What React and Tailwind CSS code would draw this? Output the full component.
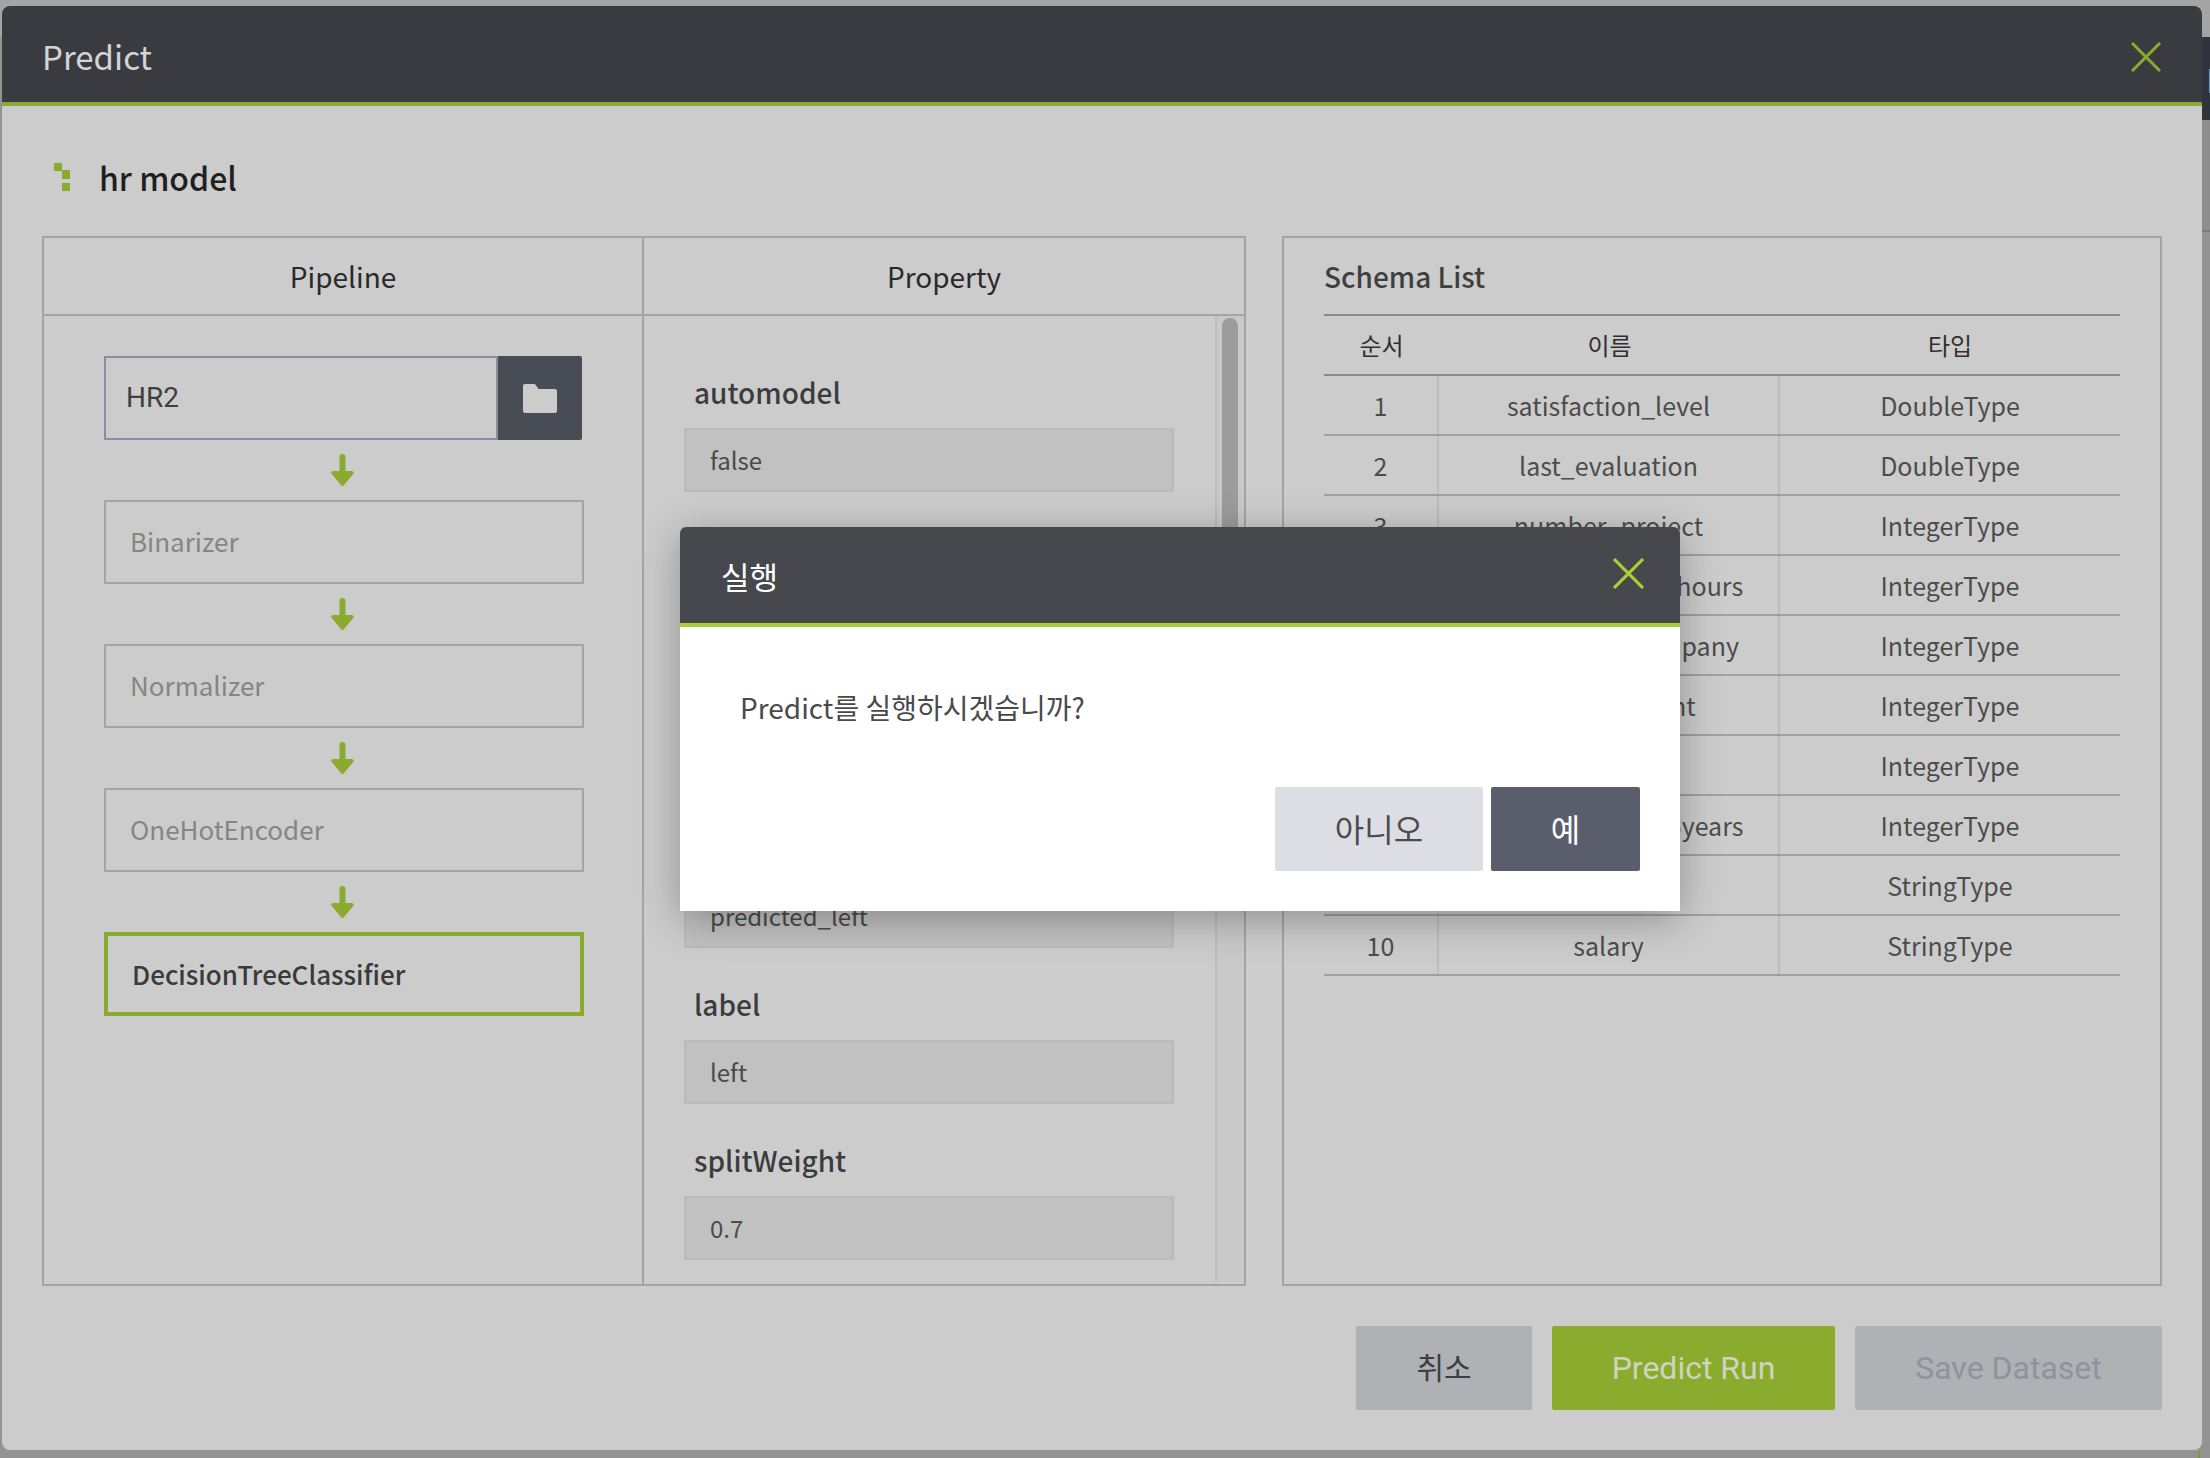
import React from "react";

const NOTO = "font-['Noto_Sans_CJK_KR','Noto_Sans',sans-serif]";
const ROBOTO = "font-['Roboto','Noto_Sans_CJK_KR',sans-serif]";

function CloseIcon({ color, className }) {
  return (
    <svg viewBox="0 0 30 30" className={className} fill="none">
      <path d="M1 1 L29 29 M29 1 L1 29" stroke={color} strokeWidth="3" />
    </svg>
  );
}

function Arrow() {
  return (
    <svg viewBox="0 0 23 32" className="my-[14px] ml-[227px] h-[32px] w-[23px] shrink-0" fill="#8aab2d">
      <path d="M8.5 3 a3 3 0 0 1 6 0 V17 H20.5 a2 2 0 0 1 1.6 3.3 L12.8 31.2 a1.8 1.8 0 0 1 -2.6 0 L.9 20.3 A2 2 0 0 1 2.5 17 H8.5 Z" />
    </svg>
  );
}

function Step({ children }) {
  return (
    <div className="flex h-[84px] w-[480px] items-center border-2 border-[#a4a4a4] pb-[4px] pl-[24px] text-[26px] text-[#858585]">
      {children}
    </div>
  );
}

function Field({ label, value, className = "" }) {
  return (
    <div className={className}>
      <div className="ml-[10px] flex h-[40px] items-center pb-[2px] text-[28px] font-medium leading-none text-[#3c3c3f]">{label}</div>
      <div className="mt-[15px] flex h-[64px] w-[490px] items-center border-2 border-[#bababa] bg-[#c1c1c1] pl-[24px] text-[24px] text-[#4a4a4a]">
        {value}
      </div>
    </div>
  );
}

const rows = [
  ["1", "satisfaction_level", "DoubleType"],
  ["2", "last_evaluation", "DoubleType"],
  ["3", "number_project", "IntegerType"],
  ["4", "average_montly_hours", "IntegerType"],
  ["5", "time_spend_company", "IntegerType"],
  ["6", "Work_accident", "IntegerType"],
  ["7", "left", "IntegerType"],
  ["8", "promotion_last_5years", "IntegerType"],
  ["9", "sales", "StringType"],
  ["10", "salary", "StringType"],
];

export default function App() {
  return (
    <div className={`relative h-[1458px] w-[2210px] overflow-hidden bg-[#939393] ${NOTO}`}>
      {/* page beneath the modal */}
      <div className="h-[37px] bg-[#a4a4a4]" />
      <div className="ml-[2202px] flex h-[83px] items-center bg-[#30343c] pl-[4px] text-[32px] text-[#a8a8a8]">P</div>
      <div className="ml-[2202px] h-[112px] border-b-2 border-[#7b7b7b] bg-[#8e8e8e]" />

      {/* Predict modal */}
      <div className="absolute left-[2px] top-[6px] flex h-[1444px] w-[2200px] flex-col overflow-hidden rounded-[8px] bg-[#cccccc]">
        <div className="flex h-[100px] shrink-0 items-center justify-between border-b-4 border-[#8aab2d] bg-[#3a3b40] pl-[40px] pr-[41px] pt-[5px]">
          <span className="text-[33px] text-[#d4d4d4]">Predict</span>
          <CloseIcon color="#8aab2d" className="h-[30px] w-[30px]" />
        </div>

        <div className="flex flex-1 flex-col pl-[40px] pr-[40px]">
          <div className="flex h-[130px] shrink-0 items-center pt-[12px]">
            <svg viewBox="0 0 16 28" className="ml-[12px] h-[28px] w-[16px]" fill="#8aab2d">
              <rect x="0" y="0" width="8" height="8" />
              <rect x="8" y="7" width="8" height="9" />
              <rect x="8" y="20" width="8" height="8" />
            </svg>
            <span className="ml-[29px] text-[32px] font-medium text-[#1f1f1f]">hr model</span>
          </div>

          <div className="flex h-[1050px] shrink-0 gap-[36px]">
            {/* Pipeline + Property */}
            <div className="flex w-[1204px] shrink-0 flex-col border-2 border-[#a4a4a4]">
              <div className="flex h-[78px] shrink-0 border-b-2 border-[#a4a4a4] text-[28px] text-[#2a2a2a]">
                <div className="flex w-[600px] items-center justify-center border-r-2 border-[#a4a4a4]">Pipeline</div>
                <div className="flex flex-1 items-center justify-center">Property</div>
              </div>
              <div className="flex min-h-0 flex-1">
                <div className="flex w-[600px] shrink-0 flex-col border-r-2 border-[#a4a4a4] pl-[60px] pt-[40px]">
                  <div className="flex h-[84px] shrink-0">
                    <div className={`flex w-[394px] items-center border-2 border-[#8c8f99] pl-[20px] text-[28px] text-[#3f3f3f] ${ROBOTO}`}>HR2</div>
                    <div className="flex w-[84px] items-center justify-center rounded-r-[2px] bg-[#484c55]">
                      <svg viewBox="0 0 34 29" className="h-[29px] w-[34px]" fill="#cccccc">
                        <path d="M0 2 a2 2 0 0 1 2 -2 H11 a2 2 0 0 1 1.6 .8 L15.5 5 H32 a2 2 0 0 1 2 2 V27 a2 2 0 0 1 -2 2 H2 a2 2 0 0 1 -2 -2 Z" />
                      </svg>
                    </div>
                  </div>
                  <Arrow />
                  <Step>Binarizer</Step>
                  <Arrow />
                  <Step>Normalizer</Step>
                  <Arrow />
                  <Step>OneHotEncoder</Step>
                  <Arrow />
                  <div className="flex h-[84px] w-[480px] items-center border-4 border-[#8aab2d] pb-[2px] pl-[24px] text-[26px] font-medium text-[#3a3a3a]">
                    DecisionTreeClassifier
                  </div>
                </div>

                <div className="relative flex-1 overflow-hidden">
                  <div className="pl-[40px] pt-[57px]">
                    <Field label="automodel" value="false" />
                    <Field label="" value="predicted_left" className="mt-[337px]" />
                    <Field label="label" value="left" className="mt-[37px]" />
                    <Field label="splitWeight" value="0.7" className="mt-[37px]" />
                  </div>
                  <div className="absolute bottom-[2px] right-0 top-0 w-[29px] border-l-2 border-[#bcbcbc] bg-[#c9c9c9] pl-[5px] pt-[2px]">
                    <div className="h-[500px] w-[16px] rounded-full bg-[#9c9c9c]" />
                  </div>
                </div>
              </div>
            </div>

            {/* Schema List */}
            <div className="flex-1 border-2 border-[#a4a4a4] pl-[40px] pr-[40px]">
              <div className="flex h-[76px] items-center text-[28px] font-medium text-[#3f3f3f]">Schema List</div>
              <div className="text-[25px] text-[#4c4c4c]">
                <div className="grid h-[62px] grid-cols-[115px_341px_1fr] border-y-2 border-[#8a8a8a] text-[24px] text-[#303030]">
                  <div className="flex items-center justify-center">순서</div>
                  <div className="flex items-center justify-center">이름</div>
                  <div className="flex items-center justify-center">타입</div>
                </div>
                {rows.map((r) => (
                  <div key={r[0]} className="grid h-[60px] grid-cols-[115px_341px_1fr] border-b-2 border-[#a0a0a0]">
                    <div className="flex items-center justify-center border-r-2 border-[#bcbcbc] pt-[2px]">{r[0]}</div>
                    <div className="flex items-center justify-center border-r-2 border-[#bcbcbc] pt-[2px]">{r[1]}</div>
                    <div className="flex items-center justify-center pt-[2px]">{r[2]}</div>
                  </div>
                ))}
              </div>
            </div>
          </div>

          <div className={`mt-[40px] flex justify-end gap-[20px] text-[32px] ${ROBOTO}`}>
            <div className={`flex h-[84px] w-[176px] items-center justify-center rounded-[2px] bg-[#b0b1b5] pb-[4px] text-[30px] text-[#3d3e42] ${NOTO}`}>취소</div>
            <div className="flex h-[84px] w-[283px] items-center justify-center rounded-[2px] bg-[#8aab2d] text-[#cfd3c0]">Predict Run</div>
            <div className="flex h-[84px] w-[307px] items-center justify-center rounded-[2px] bg-[#b0b1b5] text-[#91929a]">Save Dataset</div>
          </div>
        </div>
      </div>

      <div className="absolute left-[2198px] top-[1451px] h-[7px] w-[2px] bg-[#7f9a30]" />

      {/* Confirm dialog */}
      <div className="absolute left-[680px] top-[527px] flex h-[384px] w-[1000px] flex-col overflow-hidden rounded-t-[6px] bg-white shadow-[0_8px_40px_rgba(0,0,0,0.3)]">
        <div className="flex h-[100px] shrink-0 items-center justify-between border-b-4 border-[#a8d032] bg-[#47484e] pl-[41px] pr-[36px]">
          <span className="pt-[2px] text-[31px] text-white">실행</span>
          <CloseIcon color="#a8d032" className="mb-[3px] h-[31px] w-[31px]" />
        </div>
        <div className="pl-[60px] pt-[55px] text-[28px] leading-[50px] text-[#4a4a4a]">Predict를 실행하시겠습니까?</div>
        <div className="mt-[55px] flex justify-end gap-[8px] pr-[40px] text-[32px]">
          <div className="flex h-[84px] w-[208px] items-center justify-center rounded-[2px] bg-[#dddee3] pb-[2px] text-[#4b4b50]">아니오</div>
          <div className="flex h-[84px] w-[149px] items-center justify-center rounded-[2px] bg-[#5a5e6c] pb-[2px] text-white">예</div>
        </div>
      </div>
    </div>
  );
}
